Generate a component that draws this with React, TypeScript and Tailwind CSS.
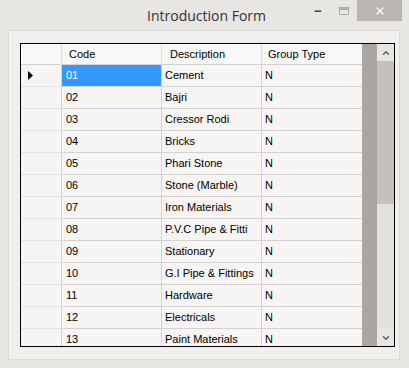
import { Minus, X, ChevronUp, ChevronDown } from 'lucide-react';

const ROWS = [
  ['01', 'Cement'],
  ['02', 'Bajri'],
  ['03', 'Cressor Rodi'],
  ['04', 'Bricks'],
  ['05', 'Phari Stone'],
  ['06', 'Stone (Marble)'],
  ['07', 'Iron Materials'],
  ['08', 'P.V.C Pipe & Fitti'],
  ['09', 'Stationary'],
  ['10', 'G.I Pipe & Fittings'],
  ['11', 'Hardware'],
  ['12', 'Electricals'],
  ['13', 'Paint Materials'],
];

export default function App() {
  return (
    <div
      className="w-[409px] h-[368px] bg-[#e8e6e3] flex flex-col overflow-hidden text-black"
      style={{ fontFamily: '"Liberation Sans", Arial, sans-serif' }}
    >
      {/* Title bar */}
      <div className="h-[30px] flex items-start shrink-0">
        <div className="flex-1 h-[30px] flex items-center justify-center pl-[108px]">
          <span
            className="text-[14px] text-[#333]"
            style={{ fontFamily: '"Open Sans", "Noto Sans", sans-serif' }}
          >
            Introduction Form
          </span>
        </div>
        <div className="flex items-start pr-[7px]">
          <div className="w-[26px] h-[21px] flex items-center justify-center">
            <Minus className="w-[10px] h-[10px] text-[#222]" strokeWidth={3} />
          </div>
          <div className="w-[26px] h-[21px] flex items-center justify-center">
            <div className="w-[10px] h-[8px] border border-[#b0aeab] border-t-[3px]" />
          </div>
          <div className="w-[45px] h-[21px] bg-[#bab5b1] flex items-center justify-center">
            <X className="w-[12px] h-[12px] text-white" strokeWidth={2.5} />
          </div>
        </div>
      </div>

      {/* Client area */}
      <div className="ml-[8px] mr-[9px] h-[330px] bg-[#f0efed] border border-[#dcdad7] pl-[11px] pt-[12px] shrink-0">
        <div className="w-[375px] h-[304px] border border-black flex overflow-hidden bg-[#aba6a2]">
          <div className="w-[341px] flex flex-col bg-[#f6f5f4] text-[11px]">
            {/* Header */}
            <div className="h-[21px] flex border-b border-[#d4d1ce] bg-[#f8f8f8] shrink-0">
              <div className="w-[41px] border-r border-[#e2e0dd]" />
              <div className="w-[100px] border-r border-[#e2e0dd] pl-[7px] flex items-center">Code</div>
              <div className="w-[100px] border-r border-[#e2e0dd] pl-[8px] flex items-center">Description</div>
              <div className="w-[100px] pl-[6px] flex items-center">Group Type</div>
            </div>
            {ROWS.map(([code, desc], i) => (
              <div key={code} className="h-[22px] flex shrink-0">
                <div className="w-[41px] border-r border-[#d4d1ce] border-b border-b-[#e6e4e1] flex items-center pl-[7px]">
                  {i === 0 && (
                    <svg width="5" height="9" viewBox="0 0 5 9">
                      <path d="M0 0 L5 4.5 L0 9 Z" fill="#000" />
                    </svg>
                  )}
                </div>
                <div
                  className={
                    i === 0
                      ? 'w-[100px] border-r border-b border-[#d4d1ce] bg-[#3399ff] text-white pl-[4px] flex items-center'
                      : 'w-[100px] border-r border-b border-[#d4d1ce] pl-[4px] flex items-center'
                  }
                >
                  {code}
                </div>
                <div className="w-[100px] border-r border-b border-[#d4d1ce] pl-[3px] flex items-center overflow-hidden whitespace-nowrap">
                  {desc}
                </div>
                <div className="w-[100px] border-b border-[#d4d1ce] pl-[3px] flex items-center">N</div>
              </div>
            ))}
          </div>
          <div className="w-[15px] bg-[#aba6a2]" />
          {/* Scrollbar */}
          <div className="w-[17px] flex flex-col bg-[#e3e1de]">
            <div className="h-[17px] flex items-center justify-center bg-[#e8e6e3]">
              <ChevronUp className="w-[10px] h-[10px] text-[#5a5653]" strokeWidth={3} />
            </div>
            <div className="h-[143px] bg-[#c4c0bc]" />
            <div className="flex-1" />
            <div className="h-[17px] flex items-center justify-center bg-[#e8e6e3]">
              <ChevronDown className="w-[10px] h-[10px] text-[#5a5653]" strokeWidth={3} />
            </div>
          </div>
        </div>
      </div>
    </div>
  );
}
